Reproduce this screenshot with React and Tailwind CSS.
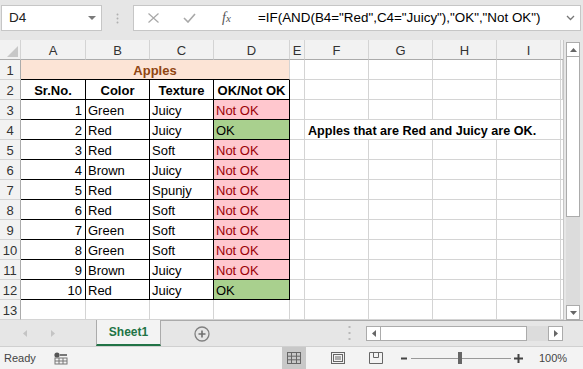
import React from "react";

const data = [
  [1, "Green", "Juicy", false],
  [2, "Red", "Juicy", true],
  [3, "Red", "Soft", false],
  [4, "Brown", "Juicy", false],
  [5, "Red", "Spunjy", false],
  [6, "Red", "Soft", false],
  [7, "Green", "Soft", false],
  [8, "Green", "Soft", false],
  [9, "Brown", "Juicy", false],
  [10, "Red", "Juicy", true],
];

const cols = ["A", "B", "C", "D", "E", "F", "G", "H", "I"];

const gray = "border-r border-b border-[#d4d4d4] h-[20px] overflow-hidden whitespace-nowrap";
const blk = "border-r border-b border-black h-[20px] overflow-hidden whitespace-nowrap pt-[3px] leading-[16px]";

function RowHead({ n }) {
  return (
    <div className="h-[20px] bg-[#f2f2f2] border-r border-b border-r-[#ababab] border-b-[#d4d4d4] text-center pt-[3px] leading-[16px] text-[13px] text-[#333]">
      {n}
    </div>
  );
}

function Empty({ n }) {
  const out = [];
  for (let i = 0; i < n; i++) out.push(<div key={i} className={gray} />);
  return out;
}

export default function App() {
  const gridRows = [];
  gridRows.push(
    <div key="corner" className="h-[20px] bg-[#f2f2f2] border-r border-b border-r-[#d4d4d4] border-b-[#ababab] relative">
      <svg width="21" height="20" className="block">
        <polygon points="18,6 18,17 7,17" fill="#c8c8c8" />
      </svg>
    </div>
  );
  cols.forEach((c) =>
    gridRows.push(
      <div key={"h" + c} className="h-[20px] bg-[#f2f2f2] border-r border-b border-r-[#d4d4d4] border-b-[#ababab] text-center pt-[3px] leading-[16px] text-[13px] text-[#333]">
        {c}
      </div>
    )
  );
  gridRows.push(<div key="hJ" className="h-[20px] bg-[#f2f2f2] border-b border-b-[#ababab]" />);

  gridRows.push(<RowHead key="r1" n={1} />);
  gridRows.push(
    <div key="a1" className="col-span-4 h-[20px] bg-[#fce4d6] border-r border-b border-r-[#d4d4d4] border-b-black text-center pt-[3px] leading-[16px] font-bold text-[#8f4512]">
      Apples
    </div>
  );
  gridRows.push(<Empty key="e1" n={6} />);

  gridRows.push(<RowHead key="r2" n={2} />);
  ["Sr.No.", "Color", "Texture", "OK/Not OK"].forEach((t) =>
    gridRows.push(
      <div key={"t" + t} className={blk + " text-center font-bold"}>
        {t}
      </div>
    )
  );
  gridRows.push(<Empty key="e2" n={6} />);

  data.forEach(([n, color, tex, ok], i) => {
    const r = i + 3;
    gridRows.push(<RowHead key={"r" + r} n={r} />);
    gridRows.push(
      <div key={"a" + r} className={blk + " text-right pr-[3px]"}>
        {n}
      </div>
    );
    gridRows.push(
      <div key={"b" + r} className={blk + " pl-[2px]"}>
        {color}
      </div>
    );
    gridRows.push(
      <div key={"c" + r} className={blk + " pl-[2px]"}>
        {tex}
      </div>
    );
    gridRows.push(
      ok ? (
        <div key={"d" + r} className={blk + " pl-[2px] bg-[#a9d08e] text-black"}>
          OK
        </div>
      ) : (
        <div key={"d" + r} className={blk + " pl-[2px] bg-[#ffc7ce] text-[#9c0006]"}>
          Not OK
        </div>
      )
    );
    gridRows.push(<div key={"e" + r} className={gray} />);
    if (r === 4) {
      gridRows.push(
        <div key="f4" className="border-b border-[#d4d4d4] h-[20px] whitespace-nowrap pl-[3px] pt-[3px] leading-[16px] font-bold text-[12.6px] relative z-10 overflow-visible">
          Apples that are Red and Juicy are OK.
        </div>
      );
      gridRows.push(<div key="g4" className="border-b border-[#d4d4d4] h-[20px]" />);
      gridRows.push(<div key="h4" className="border-b border-[#d4d4d4] h-[20px]" />);
      gridRows.push(<div key="i4" className={gray} />);
      gridRows.push(<div key="j4" className="border-b border-[#d4d4d4] h-[20px]" />);
    } else {
      gridRows.push(<Empty key={"x" + r} n={4} />);
      gridRows.push(<div key={"j" + r} className="border-b border-[#d4d4d4] h-[20px]" />);
    }
  });

  gridRows.push(<RowHead key="r13" n={13} />);
  gridRows.push(<Empty key="e13" n={9} />);
  gridRows.push(<div key="j13" className="border-b border-[#d4d4d4] h-[20px]" />);

  return (
    <div className="w-[583px] h-[369px] overflow-hidden flex flex-col bg-[#e6e6e6] font-['Liberation_Sans',Arial,sans-serif] text-[13px] text-black">
      {/* formula bar */}
      <div className="h-[40px] flex items-start pt-[5px] shrink-0">
        <div className="ml-[1px] w-[101px] h-[26px] bg-white border border-[#c6c6c6] flex items-center pl-[7px] pr-[5px]">
          <span className="flex-1 text-[13.5px] text-[#222]">D4</span>
          <svg width="8" height="4">
            <polygon points="0,0 8,0 4,4" fill="#7a7a7a" />
          </svg>
        </div>
        <div className="w-[31px] h-[26px] flex items-center justify-center">
          <svg width="3" height="11">
            <circle cx="1.5" cy="1.5" r="1" fill="#b0b0b0" />
            <circle cx="1.5" cy="5.5" r="1" fill="#b0b0b0" />
            <circle cx="1.5" cy="9.5" r="1" fill="#b0b0b0" />
          </svg>
        </div>
        <div className="w-[448px] h-[26px] bg-white border border-[#c6c6c6] flex items-center">
          <div className="w-[37px] flex justify-center pl-[2px]">
            <svg width="11" height="10">
              <path d="M0.5 0.5L10.5 9.5M10.5 0.5L0.5 9.5" stroke="#a8a8a8" strokeWidth="1.2" />
            </svg>
          </div>
          <div className="w-[37px] flex justify-center">
            <svg width="13" height="10">
              <path d="M1 5L5 9L12 1" stroke="#a8a8a8" strokeWidth="1.6" fill="none" />
            </svg>
          </div>
          <div className="w-[37px] flex justify-center">
            <span className="font-['Liberation_Serif',serif] italic text-[14px] text-[#555] leading-none">
              f<span className="text-[11px]">x</span>
            </span>
          </div>
          <div className="flex-1 pl-[13px] whitespace-nowrap text-[13.4px] text-black">
            =IF(AND(B4="Red",C4="Juicy"),"OK","Not OK")
          </div>
          <div className="w-[20px] flex justify-center">
            <svg width="9" height="6">
              <path d="M1 1L4.5 4.5L8 1" stroke="#777" strokeWidth="1.3" fill="none" />
            </svg>
          </div>
        </div>
      </div>

      {/* sheet */}
      <div className="h-[280px] flex shrink-0">
        <div className="w-[564px] bg-white border-r border-[#c6c6c6] overflow-hidden">
          <div className="grid grid-cols-[21px_65px_64px_64px_76px_15px_64px_64px_64px_64px_2px] grid-rows-[repeat(14,20px)]">
            {gridRows}
          </div>
        </div>
        <div className="w-[19px] flex flex-col pl-[2px] pt-[2px]">
          <div className="w-[14px] h-[15px] bg-white border border-[#ababab] flex items-center justify-center">
            <svg width="7" height="4">
              <polygon points="0,4 7,4 3.5,0" fill="#666" />
            </svg>
          </div>
          <div className="w-[14px] h-[160px] bg-white border border-t-0 border-[#ababab]" />
          <div className="flex-1 w-[14px] bg-[#dcdcdc]" />
          <div className="w-[14px] h-[15px] bg-white border border-[#ababab] flex items-center justify-center">
            <svg width="7" height="4">
              <polygon points="0,0 7,0 3.5,4" fill="#666" />
            </svg>
          </div>
        </div>
      </div>

      {/* tabs bar */}
      <div className="h-[27px] flex shrink-0 bg-[#e6e6e6] border-b border-[#d0d0d0]">
        <div className="w-[96px] flex items-center">
          <div className="w-[27px] flex justify-end">
            <svg width="4" height="7">
              <polygon points="4,0 4,7 0,3.5" fill="#c4c4c4" />
            </svg>
          </div>
          <div className="w-[28px] flex justify-end">
            <svg width="4" height="7">
              <polygon points="0,0 0,7 4,3.5" fill="#c4c4c4" />
            </svg>
          </div>
        </div>
        <div className="w-[65px] bg-[#f3f3f3] border-x border-[#ababab] border-b-2 border-b-[#217346] flex items-center justify-center font-bold text-[12px] text-[#217346]">
          Sheet1
        </div>
        <div className="flex-1 border-t border-[#ababab] flex items-center">
          <div className="w-[82px] flex justify-center">
            <svg width="16" height="16">
              <circle cx="8" cy="8" r="7" stroke="#808080" strokeWidth="1.3" fill="none" />
              <path d="M8 4.5V11.5M4.5 8H11.5" stroke="#707070" strokeWidth="1.6" />
            </svg>
          </div>
          <div className="w-[123px] flex justify-end pr-[15px]">
            <svg width="3" height="15">
              <rect x="0.5" y="0" width="2" height="2" fill="#b8b8b8" />
              <rect x="0.5" y="6" width="2" height="2" fill="#b8b8b8" />
              <rect x="0.5" y="12" width="2" height="2" fill="#b8b8b8" />
            </svg>
          </div>
          <div className="w-[197px] h-[15px] flex">
            <div className="w-[15px] h-[15px] bg-white border border-[#ababab] flex items-center justify-center">
              <svg width="4" height="7">
                <polygon points="4,0 4,7 0,3.5" fill="#666" />
              </svg>
            </div>
            <div className="w-[146px] h-[15px] bg-white border-y border-r border-[#ababab]" />
            <div className="w-[21px] h-[15px] bg-[#dcdcdc]" />
            <div className="w-[15px] h-[15px] bg-white border border-[#ababab] flex items-center justify-center">
              <svg width="4" height="7">
                <polygon points="0,0 0,7 4,3.5" fill="#666" />
              </svg>
            </div>
          </div>
        </div>
      </div>

      {/* status bar */}
      <div className="flex-1 bg-[#f3f3f3] flex items-center text-[11px] text-[#444]">
        <span className="pl-[4px] w-[54px]">Ready</span>
        <svg width="14" height="13">
          <circle cx="3" cy="3" r="2.6" fill="#555" />
          <rect x="6" y="2" width="7" height="2" fill="#777" />
          <rect x="1" y="6" width="12" height="6" fill="none" stroke="#777" strokeWidth="1" />
          <path d="M5 6V12M9 6V12M1 9H13" stroke="#777" strokeWidth="1" />
        </svg>
        <div className="w-[214px]" />
        <div className="w-[24px] h-[22px] bg-[#c8c8c8] flex items-center justify-center">
          <svg width="14" height="12">
            <rect x="0.5" y="0.5" width="13" height="11" fill="none" stroke="#666" />
            <path d="M4.5 0.5V11.5M9.5 0.5V11.5M0.5 4.2H13.5M0.5 7.8H13.5" stroke="#666" strokeWidth="1" />
          </svg>
        </div>
        <div className="w-[25px]" />
        <svg width="14" height="12">
          <rect x="0.5" y="0.5" width="13" height="11" fill="none" stroke="#666" />
          <rect x="2.5" y="2.5" width="9" height="7" fill="none" stroke="#666" />
          <path d="M4 5H10M4 7H10" stroke="#666" strokeWidth="1" />
        </svg>
        <div className="w-[24px]" />
        <svg width="14" height="12">
          <path d="M0.5 11.5V0.5H13.5V11.5H0.5M0.5 11.5" fill="none" stroke="#666" />
          <path d="M4.5 0.5V5.5H9.5V0.5" fill="none" stroke="#666" />
        </svg>
        <div className="w-[18px]" />
        <svg width="122" height="14">
          <path d="M0 7.5H6" stroke="#444" strokeWidth="2" />
          <path d="M10 7.5H110" stroke="#999" strokeWidth="1" />
          <rect x="57" y="1" width="4" height="12" fill="#666" />
          <path d="M113 7.5H122M117.5 3V12" stroke="#444" strokeWidth="2" />
        </svg>
        <div className="w-[16px]" />
        <span className="text-[11px] text-[#444]">100%</span>
      </div>
    </div>
  );
}
